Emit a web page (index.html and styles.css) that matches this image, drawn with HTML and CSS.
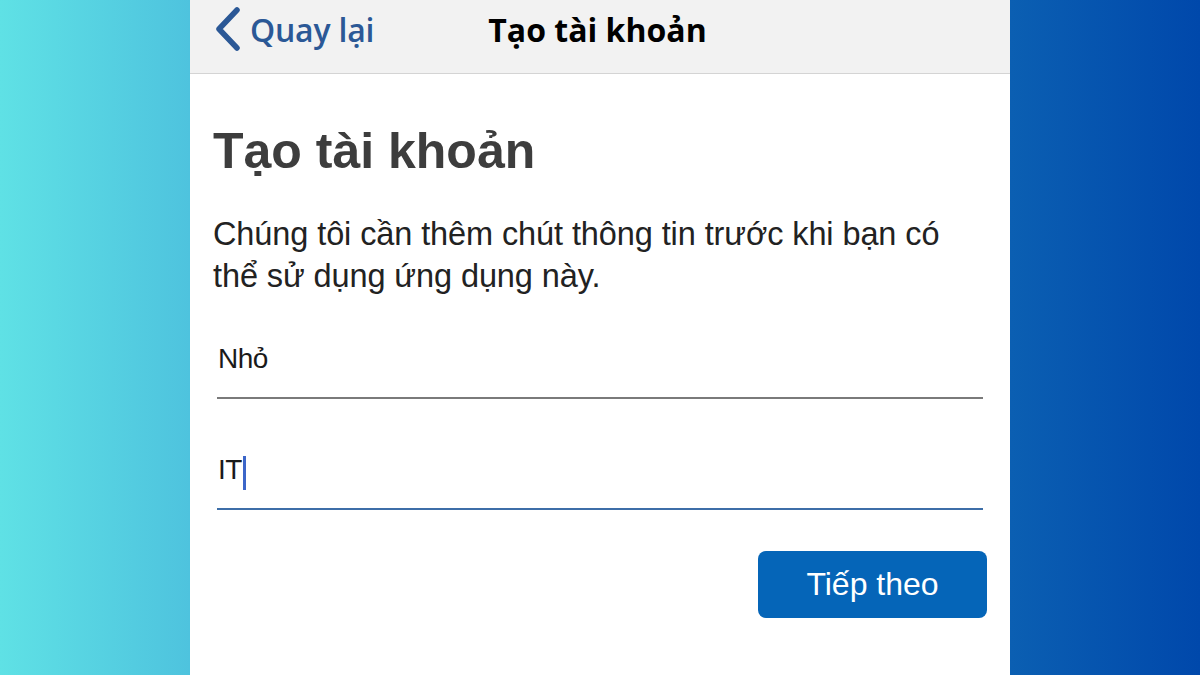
FILE: index.html
```html
<!DOCTYPE html>
<html lang="vi">
<head>
<meta charset="utf-8">
<title>Tạo tài khoản</title>
<link rel="stylesheet" href="styles.css">
</head>
<body>
<div class="stage">
  <div class="side side-left"></div>
  <div class="phone">
    <header class="nav">
      <a class="back" href="#">
        <svg class="chev" width="28" height="44" viewBox="0 0 28 44"><path d="M23 3 L5 22 L23 41" fill="none" stroke="#2b5896" stroke-width="5.5" stroke-linecap="round" stroke-linejoin="round"/></svg>
        <span class="back-text">Quay lại</span>
      </a>
      <div class="nav-title">Tạo tài khoản</div>
    </header>
    <main class="content">
      <h1 class="heading">Tạo tài khoản</h1>
      <p class="desc">Chúng tôi cần thêm chút thông tin trước khi bạn có<br>thể sử dụng ứng dụng này.</p>
      <div class="field field-first">
        <span class="value">Nhỏ</span>
      </div>
      <div class="field field-active">
        <span class="value">IT</span><span class="caret"></span>
      </div>
      <div class="actions">
        <button class="btn">Tiếp theo</button>
      </div>
    </main>
  </div>
  <div class="side side-right"></div>
</div>
</body>
</html>
```

FILE: styles.css
```css
* { box-sizing: border-box; }
html, body { margin: 0; padding: 0; }
body { width: 1200px; height: 675px; overflow: hidden; font-family: "Liberation Sans", Arial, sans-serif; }
.stage { display: flex; width: 1200px; height: 675px; }
.side { width: 190px; flex: none; }
.side-left { background: linear-gradient(to right, #5fe1e5, #4ec3de); }
.side-right { background: linear-gradient(to right, #0b5fb2, #0048ab); }
.phone { width: 820px; flex: none; background: #fff; display: flex; flex-direction: column; }
.nav { height: 74px; background: #f2f2f2; border-bottom: 1px solid #d4d4d4; display: flex; align-items: center; padding-left: 24px; }
.back { display: flex; align-items: center; text-decoration: none; color: #2b5896; }
.chev { display: block; margin-top: -16px; }
.back-text { font-family: "Open Sans", sans-serif; font-size: 32px; font-weight: 600; margin-left: 8px; margin-top: -14px; letter-spacing: -0.2px; }
.nav-title { font-family: "Open Sans", sans-serif; font-weight: 700; font-size: 32px; color: #000; margin-left: 114px; margin-top: -14px; letter-spacing: 0; }
.content { padding: 0 23px 0 23px; }
.heading { margin: 47px 0 0; font-size: 50px; font-weight: 700; color: #3d3d3d; line-height: 60px; }
.desc { margin: 32px 0 0; font-size: 32.5px; line-height: 42px; color: #222; letter-spacing: -0.1px; }
.field { margin-left: 4px; margin-right: 4px; display: flex; align-items: flex-end; padding-left: 1px; border-bottom: 2px solid #7a7a7a; }
.field-first { height: 102px; padding-bottom: 22px; }
.field-active { height: 111px; border-bottom-color: #3d6ea8; padding-bottom: 22px; }
.value { font-size: 28px; color: #1a1a1a; line-height: 32px; letter-spacing: -0.5px; }
.caret { display: inline-block; width: 3px; height: 34px; background: #3c66c9; margin-left: 1px; margin-bottom: -4px; }
.actions { display: flex; justify-content: flex-end; margin-top: 41px; }
.btn { width: 229px; height: 67px; background: #0565b8; color: #fff; border: none; border-radius: 8px; font-family: "Liberation Sans", Arial, sans-serif; font-size: 32px; padding: 0; letter-spacing: 0; }
```
